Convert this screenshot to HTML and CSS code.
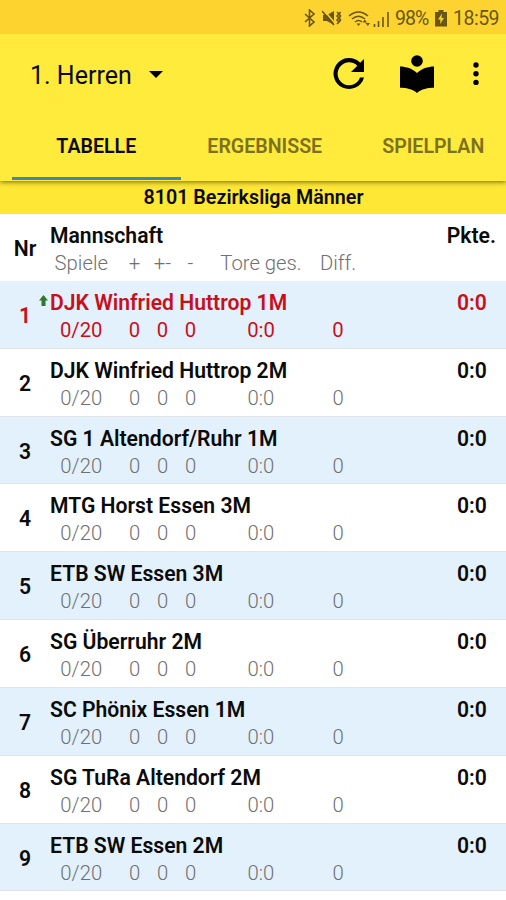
FILE: index.html
```html
<!DOCTYPE html>
<html lang="de">
<head>
  <meta charset="UTF-8">
  <title>1. Herren: Tabelle</title>
  <link rel="stylesheet" href="styles.css">
</head>
<body>
  <div class="statusbar">
    <svg class="bt" width="12" height="18" viewBox="0 0 12 18"><path d="M1 5l9 8-4.500 4V1l4.500 4-9 8"/></svg>
    <svg class="mute" width="20" height="18" viewBox="0 0 20 18"><path class="fill" d="M1 6h4l7-4v14l-7-4H1z"/><path class="slash" d="M2.500 2l12 14"/><path d="M0 2l12 14M15 3l2 2-2 2 2 2-2 2 2 2-2 2M18.500 3l-1.500 2 1.500 2-1.500 2 1.500 2-1.500 2"/></svg>
    <svg class="wifi" width="24" height="18" viewBox="0 0 24 18"><path d="M1 6q9.500-8 19 0M4 9q6.500-5.500 13 0M7 12q3.500-3 7 0"/><path class="fill" d="M8.500 13.500h4l-2 2.500zM14.500 12.500l2.300-3 2.200 3zM17.500 13h4.500l-2.200 3z"/></svg>
    <svg class="signal" width="17" height="18" viewBox="0 0 17 18"><path d="M1.500 17v-3M5.500 17v-6M10 17V7M15 17V2"/></svg>
    <span class="percent">98%</span>
    <svg class="battery" width="12" height="18" viewBox="0 0 12 18"><path class="fill" d="M3.500 1h5v2H12v14.500H0V3h3.500z"/><path class="flash" d="M7 4.500L3 10.500h2.500L5 15l4-6H6.500z"/></svg>
    <span class="clock">18:59</span>
  </div>

  <div class="header">
    <div class="toolbar">
      <span class="team">1. Herren</span>
      <svg class="caret" width="14" height="7" viewBox="0 0 14 7"><path d="M0 0h14L7 7z"/></svg>
      <svg class="refresh" width="32" height="32" viewBox="0 0 32 32"><path d="M27.200 4.800A15.500 15.500 0 1 0 31 19.500h-4A11.500 11.500 0 1 1 24.300 7.700L18 14h13V1z"/></svg>
      <svg class="reader" width="36" height="38" viewBox="0 0 36 38"><circle cx="18" cy="6" r="5.800"/><path d="M18 18C13.500 13.500 7 11.400 1 11.400v21.400c6 0 12.500 1.300 17 5.200 4.500-3.900 11-5.200 17-5.200V11.400c-6 0-12.500 2.100-17 6.600z"/></svg>
      <svg class="more" width="6" height="24" viewBox="0 0 6 24"><circle cx="3" cy="3" r="2.700"/><circle cx="3" cy="11.700" r="2.700"/><circle cx="3" cy="20.400" r="2.700"/></svg>
    </div>
    <div class="tabs">
      <div class="tab active">TABELLE</div>
      <div class="tab">ERGEBNISSE</div>
      <div class="tab">SPIELPLAN</div>
    </div>
  </div>

  <div class="league">8101 Bezirksliga Männer</div>

  <div class="row head">
    <div class="nr">Nr</div>
    <div class="info">
      <div class="name">Mannschaft</div>
      <div class="stats"><span>Spiele</span><span>+</span><span>+-</span><span>-</span><span>Tore ges.</span><span>Diff.</span></div>
    </div>
    <div class="points">Pkte.</div>
  </div>

  <div id="table"></div>

  <script src="table.js"></script>
</body>
</html>
```

FILE: styles.css
```css
body {
  margin: 0;
  height: 900px;
  overflow: hidden;
  background: #fff;
  color: #0b0b0b;
  font-family: Roboto, "Liberation Sans", sans-serif;
}
svg {
  display: block;
  flex: none;
}

/* Statusleiste */
.statusbar {
  position: relative;
  z-index: 1;
  display: flex;
  align-items: center;
  justify-content: flex-end;
  box-sizing: border-box;
  height: 34px;
  padding: 3px 7px 0 0;
  background: #fdd42f;
  color: #695615;
  font-size: 19.5px;
}
.statusbar svg {
  fill: none;
  stroke: #695615;
  stroke-width: 1.6;
}
.statusbar .fill {
  fill: #695615;
  stroke: none;
}
.statusbar .flash {
  fill: #fdd42f;
  stroke: none;
}
.statusbar .slash { stroke: #fdd42f; }
.bt { margin-top: -2px; }
.mute { margin: -2px 0 0 6px; }
.wifi { margin-left: 6px; }
.signal { margin-left: 1px; }
.percent {
  width: 35px;
  margin-left: 5px;
  letter-spacing: -1px;
}
.battery { margin: -1px 0 0 5px; }
.clock {
  width: 46px;
  margin-left: 6px;
  letter-spacing: -0.5px;
}

/* Kopf mit Reitern */
.header {
  position: relative;
  height: 147px;
  background: #ffeb3b;
  box-shadow: 0 1px 5px rgba(70, 60, 0, 0.75);
}
.toolbar {
  display: flex;
  align-items: center;
  height: 80px;
  padding: 0 27px 0 30px;
}
.team {
  padding-top: 2px;
  font-size: 25px;
  width: 102px;
  white-space: nowrap;
}
.caret { margin-left: 17px; }
.refresh { margin-left: auto; }
.reader { margin-left: 34px; }
.more { margin-left: 38px; }
.tabs {
  display: flex;
  height: 67px;
  padding-left: 12px;
  overflow: hidden;
}
.tab {
  flex: none;
  box-sizing: border-box;
  width: 168.5px;
  height: 66px;
  border-bottom: 3px solid transparent;
  color: #7d711f;
  font-size: 19.6px;
  font-weight: 600;
  line-height: 66px;
  text-align: center;
}
.tab.active {
  border-bottom-color: #3d86b8;
  color: #0b0b0b;
}

.league {
  height: 33px;
  background: #ffe736;
  font-size: 19.7px;
  font-weight: 600;
  line-height: 34px;
  text-align: center;
  text-indent: 1px;
}

/* Tabelle */
.row {
  display: grid;
  grid-template-columns: 50px 1fr 68px;
  box-sizing: border-box;
  height: 67.83px;
  border-bottom: 1px solid #dfe5e9;
  font-size: 21.15px;
  font-weight: 600;
}
.row.odd { background: #e3f1fc; }
.row.head {
  height: 67px;
  border-bottom: none;
}
.nr {
  align-self: center;
  text-align: center;
  padding-top: 2px;
}
.info {
  position: relative;
  padding-top: 8px;
}
.name {
  height: 28px;
  line-height: 28px;
  white-space: nowrap;
}
.stats {
  display: grid;
  grid-template-columns: 70.5px 28px 28px 28px 113px 41px;
  color: #707070;
  font-size: 20.3px;
  font-weight: 300;
  line-height: 27px;
  text-align: center;
  white-space: nowrap;
}
.stats span:first-child { padding-right: 8px; }
.points {
  padding-top: 8px;
  line-height: 28px;
  text-align: center;
}
.head .points {
  text-align: right;
  padding-right: 10px;
}
.own, .own .stats { color: #c8101b; }
.own .stats { font-weight: 400; }
.up {
  position: absolute;
  left: -11px;
  top: 14px;
}
```

FILE: table.js
```js
var teams = [
  "DJK Winfried Huttrop 1M",
  "DJK Winfried Huttrop 2M",
  "SG 1 Altendorf/Ruhr 1M",
  "MTG Horst Essen 3M",
  "ETB SW Essen 3M",
  "SG Überruhr 2M",
  "SC Phönix Essen 1M",
  "SG TuRa Altendorf 2M",
  "ETB SW Essen 2M"
];
var stats = ["0/20", "0", "0", "0", "0:0", "0"];
var arrow = '<svg class="up" width="9" height="12" viewBox="0 0 9 12"><path fill="#32772f" d="M4.500 0L9 5.500H6.500V11h-4V5.500H0z"/></svg>';

var html = "";
for (var i = 0; i < teams.length; i++) {
  var cls = "row";
  if (i % 2 == 0) cls += " odd";
  if (i == 0) cls += " own";
  html += '<div class="' + cls + '"><div class="nr">' + (i + 1) + '</div>' +
    '<div class="info">' + (i == 0 ? arrow : "") +
    '<div class="name">' + teams[i] + '</div>' +
    '<div class="stats"><span>' + stats.join("</span><span>") + '</span></div></div>' +
    '<div class="points">0:0</div></div>';
}
document.getElementById("table").innerHTML = html;
```
